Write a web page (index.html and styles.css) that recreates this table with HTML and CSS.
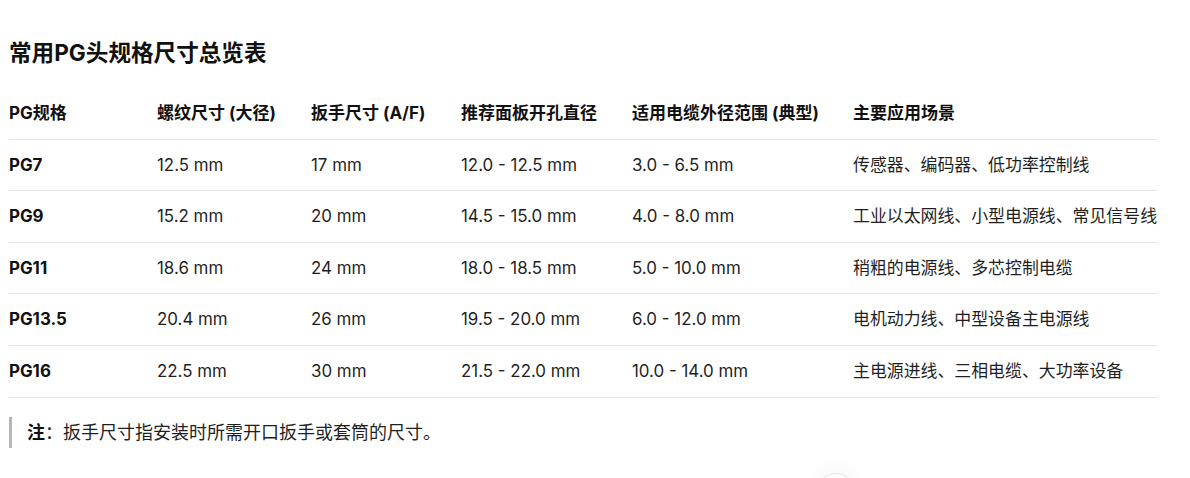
FILE: index.html
```html
<!DOCTYPE html>
<html lang="zh-CN">
<head>
<meta charset="utf-8">
<title>常用PG头规格尺寸总览表</title>
<link rel="stylesheet" href="styles.css">
</head>
<body>
<main class="doc">
  <h2 class="title">常用PG头规格尺寸总览表</h2>
  <table class="spec">
    <colgroup>
      <col class="c1"><col class="c2"><col class="c3"><col class="c4"><col class="c5"><col class="c6">
    </colgroup>
    <thead>
      <tr>
        <th>PG规格</th>
        <th>螺纹尺寸 (大径)</th>
        <th>扳手尺寸 (A/F)</th>
        <th>推荐面板开孔直径</th>
        <th>适用电缆外径范围 (典型)</th>
        <th>主要应用场景</th>
      </tr>
    </thead>
    <tbody>
      <tr><td class="pg">PG7</td><td>12.5 mm</td><td>17 mm</td><td>12.0 - 12.5 mm</td><td>3.0 - 6.5 mm</td><td>传感器、编码器、低功率控制线</td></tr>
      <tr><td class="pg">PG9</td><td>15.2 mm</td><td>20 mm</td><td>14.5 - 15.0 mm</td><td>4.0 - 8.0 mm</td><td>工业以太网线、小型电源线、常见信号线</td></tr>
      <tr><td class="pg">PG11</td><td>18.6 mm</td><td>24 mm</td><td>18.0 - 18.5 mm</td><td>5.0 - 10.0 mm</td><td>稍粗的电源线、多芯控制电缆</td></tr>
      <tr><td class="pg">PG13.5</td><td>20.4 mm</td><td>26 mm</td><td>19.5 - 20.0 mm</td><td>6.0 - 12.0 mm</td><td>电机动力线、中型设备主电源线</td></tr>
      <tr><td class="pg">PG16</td><td>22.5 mm</td><td>30 mm</td><td>21.5 - 22.0 mm</td><td>10.0 - 14.0 mm</td><td>主电源进线、三相电缆、大功率设备</td></tr>
    </tbody>
  </table>
  <blockquote class="note"><strong>注</strong>：扳手尺寸指安装时所需开口扳手或套筒的尺寸。</blockquote>
</main>
<div class="fab-clip" aria-hidden="true"><div class="fab"></div></div>
</body>
</html>
```
FILE: styles.css
```css
html, body {
  margin: 0;
  padding: 0;
  background: #ffffff;
}
html {
  height: 478px;
  overflow: hidden;
}
body {
  font-family: Inter, "Noto Sans CJK SC", sans-serif;
  color: #1f1f1f;
  font-size: 17px;
  height: 478px;
  overflow: hidden;
  position: relative;
}
.doc {
  padding: 38px 0 0 9px;
  width: 1148px;
}
.title {
  margin: 0;
  font-size: 22.6px;
  line-height: 30px;
  font-weight: 700;
  color: #111111;
}
.spec {
  margin-top: 20px;
  border-collapse: collapse;
  table-layout: fixed;
  width: 1148px;
}
.c1 { width: 148px; }
.c2 { width: 154px; }
.c3 { width: 150px; }
.c4 { width: 171px; }
.c5 { width: 221px; }
.c6 { width: 304px; }
.spec th, .spec td {
  text-align: left;
  padding: 14px 0;
  line-height: 22.6px;
  border-bottom: 1px solid #e5e5e5;
  white-space: nowrap;
}
.spec th {
  font-weight: 700;
  font-size: 17px;
  color: #111111;
}
.spec td {
  font-weight: 400;
  font-size: 16.9px;
}
.spec td.pg {
  font-weight: 700;
  color: #111111;
}
.note {
  margin: 19px 0 0 0;
  padding: 4px 0 4px 15px;
  border-left: 3px solid #b3b6bd;
  line-height: 23px;
  font-size: 18px;
}
.note strong {
  font-weight: 700;
  color: #111111;
}
.fab-clip {
  position: absolute;
  left: 795px;
  top: 455px;
  width: 80px;
  height: 23px;
  overflow: hidden;
}
.fab {
  margin: 18px 0 0 23px;
  width: 34px;
  height: 34px;
  border-radius: 50%;
  border: 1px solid #e4e4e4;
  background: #ffffff;
  box-shadow: 0 0 18px 8px rgba(0, 0, 0, 0.025);
}
```
